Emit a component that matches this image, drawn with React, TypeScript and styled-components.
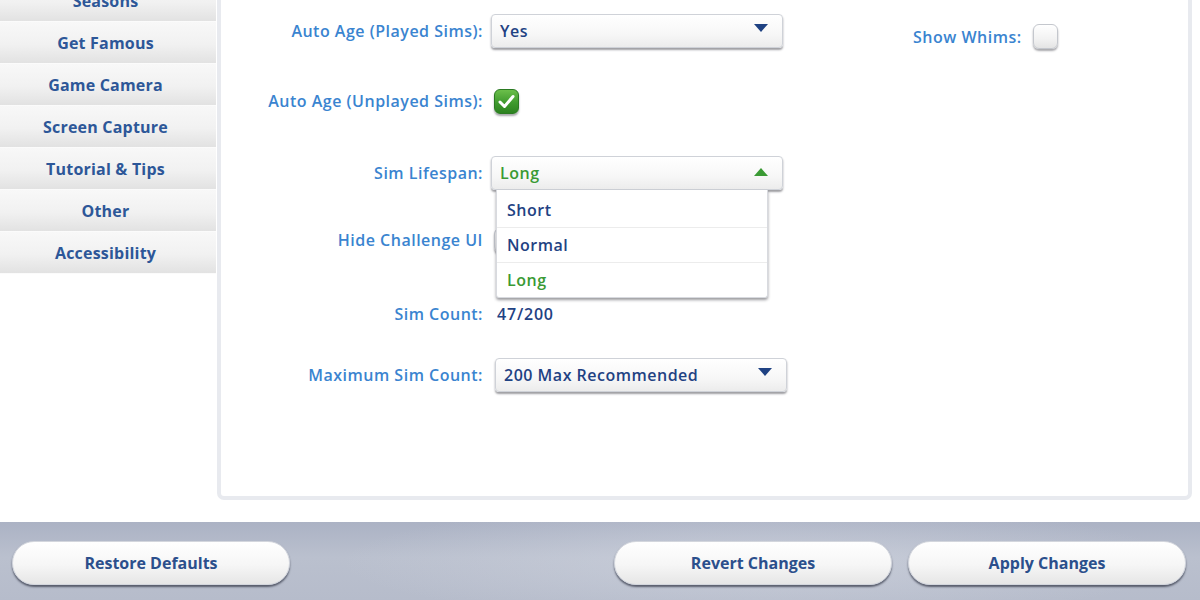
import React from 'react';
import styled, { createGlobalStyle } from 'styled-components';

const Global = createGlobalStyle`
  html, body { margin: 0; padding: 0; background: #fff; }
  body { font-family: "Open Sans", "Noto Sans", sans-serif; }
`;

const Screen = styled.div`
  width: 1200px;
  height: 600px;
  overflow: hidden;
  display: flex;
  flex-direction: column;
  background: #fff;
`;

const Main = styled.div`
  height: 522px;
  flex: none;
  display: flex;
  background: #fff;
`;

const Sidebar = styled.nav`
  width: 216px;
  flex: none;
  display: flex;
  flex-direction: column;
  margin-top: -20px;
`;

const NavItem = styled.div`
  height: 41px;
  border-bottom: 1px solid #fbfbfb;
  display: flex;
  align-items: center;
  justify-content: center;
  padding-right: 5px;
  background: linear-gradient(180deg, #f8f8f8 0%, #f1f1f1 55%, #e2e2e2 100%);
  color: #2d5798;
  font-weight: 700;
  font-size: 16px;
  letter-spacing: 0.2px;
`;

const Panel = styled.section`
  margin-left: 1px;
  width: 975px;
  height: 500px;
  box-sizing: border-box;
  border: 4px solid #e8eaef;
  border-top: none;
  border-radius: 0 0 7px 7px;
  background: #fff;
  display: flex;
  align-items: flex-start;
`;

const FormColumn = styled.div`
  width: 566px;
  display: flex;
  flex-direction: column;
  padding-top: 14px;
`;

const Row = styled.div<{ $top: number }>`
  display: grid;
  grid-template-columns: 262px 296px;
  column-gap: 8px;
  align-items: center;
  height: 34px;
  margin-top: ${p => p.$top}px;
`;

const Label = styled.div`
  text-align: right;
  color: #3a84d0;
  font-weight: 600;
  font-size: 16px;
  letter-spacing: 0.5px;
  white-space: nowrap;
`;

const Control = styled.div<{ $offset?: number }>`
  position: relative;
  display: flex;
  align-items: center;
  margin-left: ${p => p.$offset ?? 0}px;
`;

const Select = styled.div<{ $green?: boolean }>`
  width: 292px;
  height: 34px;
  box-sizing: border-box;
  border: 1px solid #cfd2d8;
  border-radius: 4px;
  background: linear-gradient(180deg, #ffffff 0%, #f7f7f7 60%, #ececec 100%);
  box-shadow: 0 2px 2px rgba(40, 40, 50, 0.45);
  display: flex;
  align-items: center;
  justify-content: space-between;
  padding: 0 14px 0 8px;
  color: ${p => (p.$green ? '#3a9a34' : '#1f4283')};
  font-weight: 600;
  font-size: 16px;
  letter-spacing: 0.5px;
`;

const Arrow = ({ up, color }: { up?: boolean; color: string }) => (
  <svg width="14" height="8" viewBox="0 0 14 8" style={{ marginTop: up ? -2 : -6 }}>
    <path d={up ? 'M0 8 L7 0 L14 8 Z' : 'M0 0 L14 0 L7 8 Z'} fill={color} />
  </svg>
);

const Menu = styled.div`
  position: absolute;
  top: 34px;
  left: 5px;
  width: 270px;
  z-index: 3;
  padding-top: 2px;
  background: #fff;
  border: 1px solid #d8dadf;
  border-top: none;
  box-shadow: 0 2px 3px rgba(30, 30, 40, 0.45);
  border-radius: 0 0 3px 3px;
  display: flex;
  flex-direction: column;
`;

const MenuItem = styled.div<{ $green?: boolean }>`
  height: 35px;
  box-sizing: border-box;
  display: flex;
  align-items: center;
  padding-left: 10px;
  font-size: 16px;
  font-weight: 600;
  letter-spacing: 0.5px;
  color: ${p => (p.$green ? '#3a9a34' : '#1f4283')};
  & + & { border-top: 1px solid #ececec; }
`;

const CheckBox = styled.div<{ $checked?: boolean }>`
  width: 25px;
  height: 25px;
  box-sizing: border-box;
  border-radius: 6px;
  display: flex;
  align-items: center;
  justify-content: center;
  border: 1px solid ${p => (p.$checked ? '#2b7a22' : '#c4c7cd')};
  background: ${p =>
    p.$checked
      ? 'linear-gradient(180deg, #6bbf4a 0%, #3f9a2e 55%, #2c8220 100%)'
      : 'linear-gradient(180deg, #ffffff 0%, #f2f2f2 60%, #e4e4e4 100%)'};
  box-shadow: 0 2px 2px rgba(40, 40, 50, 0.4);
`;

const Value = styled.div`
  color: #1f4283;
  font-weight: 600;
  font-size: 16px;
  letter-spacing: 0.8px;
`;

const WhimsGroup = styled.div`
  margin-left: 126px;
  margin-top: 24px;
  display: flex;
  align-items: center;
  gap: 11px;
`;

const BottomBar = styled.footer`
  flex: 1;
  display: flex;
  align-items: flex-start;
  padding: 19px 14px 0 12px;
  background:
    radial-gradient(ellipse 420px 60px at 760px 40px, rgba(214, 218, 228, 0.5), transparent),
    linear-gradient(180deg, #abb2c4 0%, #bac0ce 45%, #b6bccb 100%);
`;

const Spacer = styled.div`
  flex: 1;
`;

const PillButton = styled.button<{ $gap?: number }>`
  width: 278px;
  height: 44px;
  margin-left: ${p => p.$gap ?? 0}px;
  border-radius: 22px;
  border: 1px solid #d3d6dd;
  background: linear-gradient(180deg, #ffffff 0%, #f6f6f6 55%, #e6e6e6 100%);
  box-shadow: 0 2px 2px rgba(45, 50, 65, 0.7);
  color: #2b4f8c;
  font-family: "Open Sans", "Noto Sans", sans-serif;
  font-weight: 700;
  font-size: 16px;
  padding: 0;
  cursor: pointer;
`;

const navItems = ['Seasons', 'Get Famous', 'Game Camera', 'Screen Capture', 'Tutorial & Tips', 'Other', 'Accessibility'];

const Check = () => (
  <svg width="17" height="15" viewBox="0 0 17 15">
    <path d="M2 8 L6.5 12.5 L15 2.5" fill="none" stroke="#fff" strokeWidth="3" strokeLinecap="round" strokeLinejoin="round" />
  </svg>
);

export default function App() {
  return (
    <>
      <Global />
      <Screen>
        <Main>
          <Sidebar>
            {navItems.map(n => (
              <NavItem key={n}>{n}</NavItem>
            ))}
          </Sidebar>
          <Panel>
            <FormColumn>
              <Row $top={0}>
                <Label>Auto Age (Played Sims):</Label>
                <Control>
                  <Select>
                    <span>Yes</span>
                    <Arrow color="#1f4283" />
                  </Select>
                </Control>
              </Row>
              <Row $top={36}>
                <Label>Auto Age (Unplayed Sims):</Label>
                <Control $offset={3}>
                  <CheckBox $checked>
                    <Check />
                  </CheckBox>
                </Control>
              </Row>
              <Row $top={38}>
                <Label>Sim Lifespan:</Label>
                <Control>
                  <Select $green>
                    <span>Long</span>
                    <Arrow up color="#3a9a34" />
                  </Select>
                  <Menu>
                    <MenuItem>Short</MenuItem>
                    <MenuItem>Normal</MenuItem>
                    <MenuItem $green>Long</MenuItem>
                  </Menu>
                </Control>
              </Row>
              <Row $top={33}>
                <Label>Hide Challenge UI</Label>
                <Control $offset={3}>
                  <CheckBox />
                </Control>
              </Row>
              <Row $top={40}>
                <Label>Sim Count:</Label>
                <Control $offset={6}>
                  <Value>47/200</Value>
                </Control>
              </Row>
              <Row $top={27}>
                <Label>Maximum Sim Count:</Label>
                <Control $offset={4}>
                  <Select>
                    <span>200 Max Recommended</span>
                    <Arrow color="#1f4283" />
                  </Select>
                </Control>
              </Row>
            </FormColumn>
            <WhimsGroup>
              <Label>Show Whims:</Label>
              <CheckBox />
            </WhimsGroup>
          </Panel>
        </Main>
        <BottomBar>
          <PillButton>Restore Defaults</PillButton>
          <Spacer />
          <PillButton>Revert Changes</PillButton>
          <PillButton $gap={16}>Apply Changes</PillButton>
        </BottomBar>
      </Screen>
    </>
  );
}
